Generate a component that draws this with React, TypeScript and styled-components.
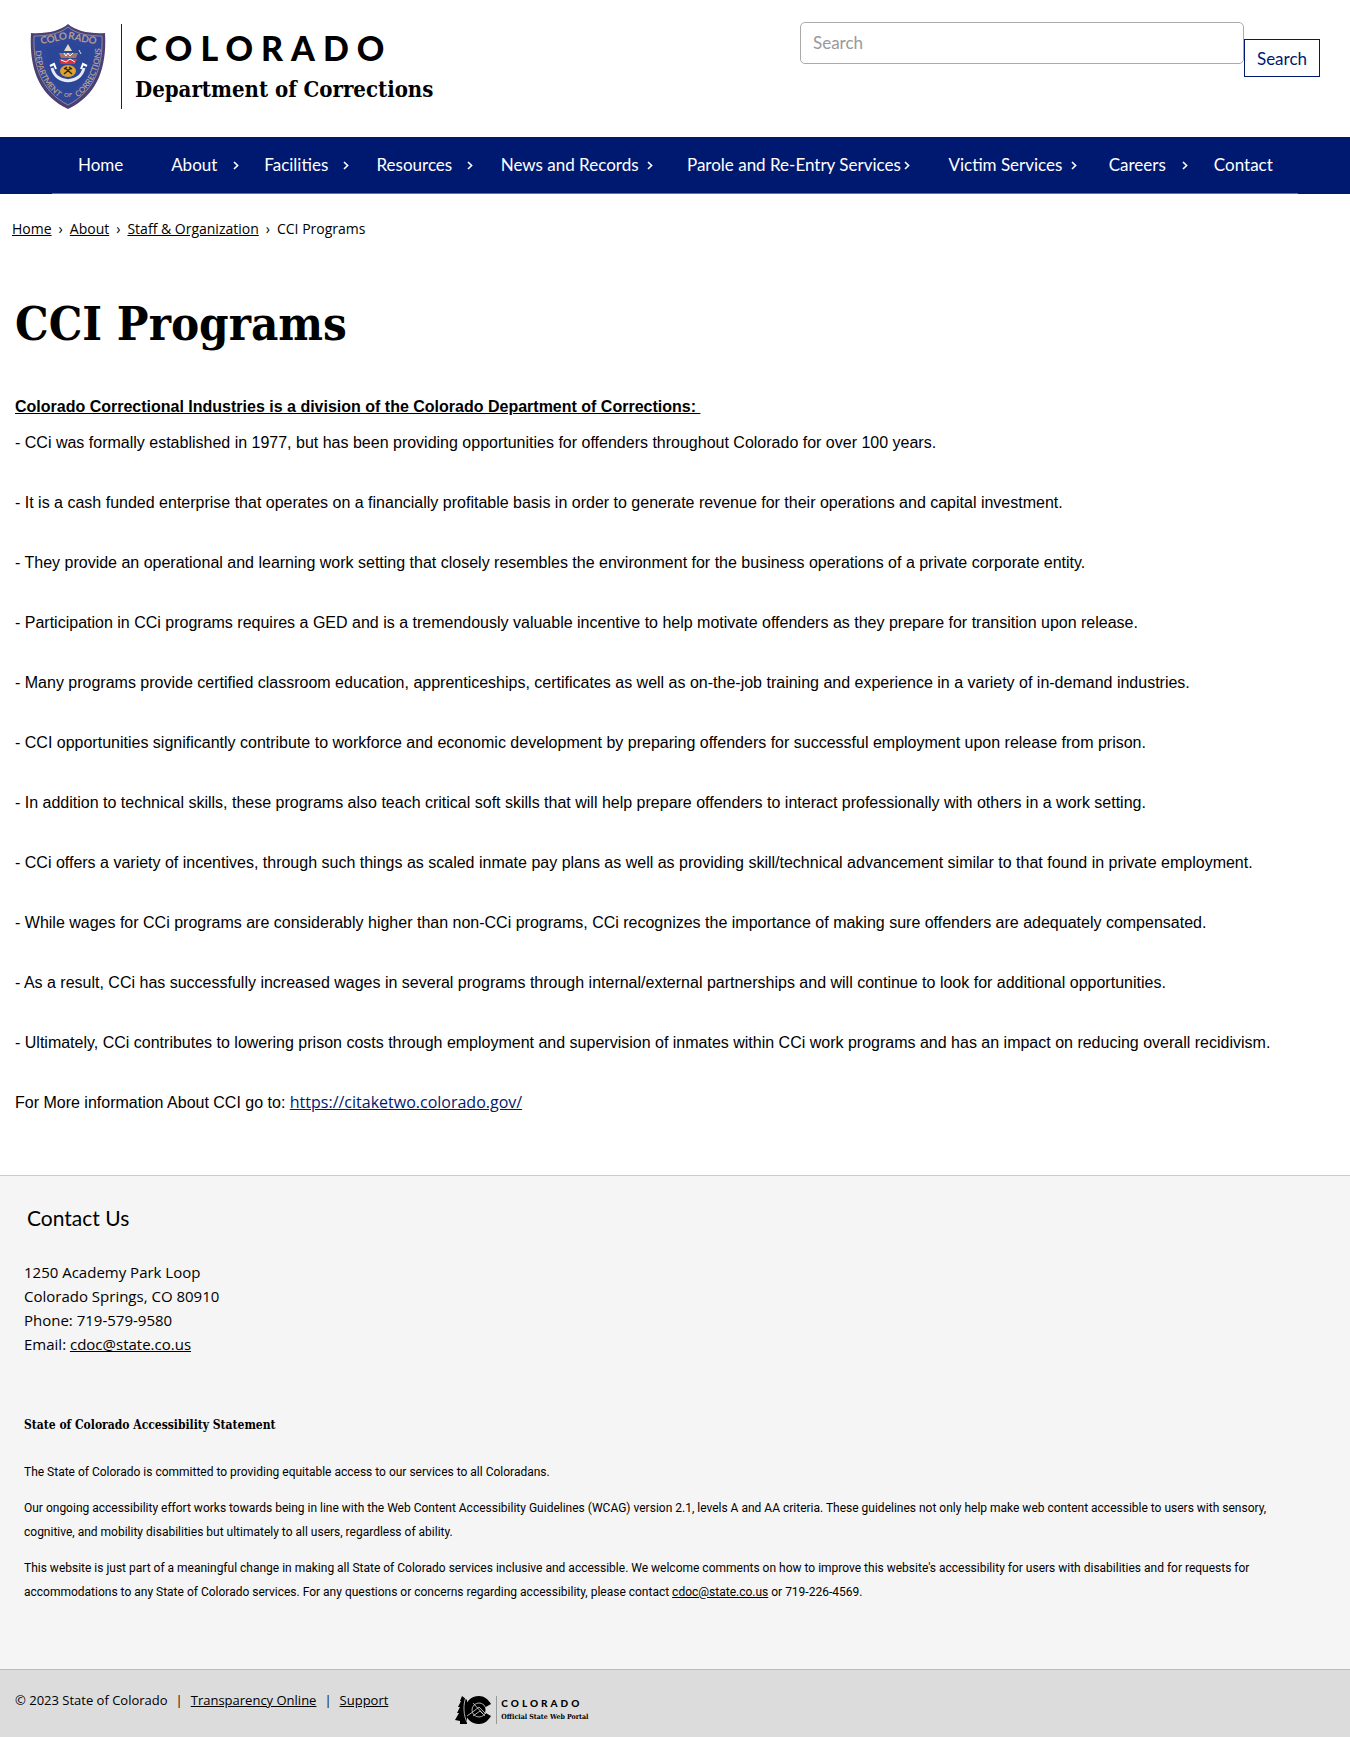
import React from "react";
import styled, { createGlobalStyle } from "styled-components";

const humanist = `"Open Sans", "Noto Sans", sans-serif`;
const geometric = `Lato, "Open Sans", sans-serif`;
const slab = `"DejaVu Serif Condensed", "DejaVu Serif", serif`;
const arial = `"Liberation Sans", Arial, sans-serif`;
const compact = `Roboto, "Open Sans", sans-serif`;

const GlobalStyle = createGlobalStyle`
  *, *::before, *::after { box-sizing: border-box; }
  body { margin: 0; background: #fff; color: #000; font-family: ${humanist}; }
  a { color: inherit; }
  h1, h2, p, ul, ol { margin: 0; padding: 0; }
  ul, ol { list-style: none; }
`;

const Header = styled.header`
  display: flex;
  justify-content: space-between;
  align-items: flex-start;
  padding: 22px 30px 28px;
`;

const Brand = styled.a`
  display: flex;
  color: #000;
  text-decoration: none;
`;

const Shield = styled.svg`
  width: 76px;
  height: 87px;
`;

const BrandText = styled.div`
  margin: 2px 0 0 15px;
  padding: 7px 0 0 13px;
  border-left: 1px solid #222;
  height: 85px;
`;

const BrandName = styled.div`
  font: 900 34px/34px ${geometric};
  letter-spacing: 8px;
`;

const BrandUnit = styled.div`
  margin-top: 8px;
  font: bold 22px/32px ${slab};
  white-space: nowrap;
`;

const SearchForm = styled.form`
  display: flex;
  align-items: flex-start;
  width: 520px;
`;

const SearchInput = styled.input`
  flex: 1;
  min-width: 0;
  height: 42px;
  padding: 0 12px 2px;
  border: 1px solid #aaa;
  border-radius: 5px;
  background: #fff;
  font: 17px ${geometric};
  &::placeholder { color: #999; opacity: 1; }
`;

const SearchButton = styled.button`
  width: 76px;
  height: 38px;
  margin-top: 17px;
  padding: 0;
  border: 1px solid #001970;
  background: #fff;
  color: #001970;
  font: 17px ${geometric};
`;

const Nav = styled.nav`
  background: #001970;
  padding: 0 52px;
`;

const NavList = styled.ul<{ $columns: string }>`
  display: grid;
  grid-template-columns: ${(p) => p.$columns};
  height: 57px;
  padding-left: 26px;
  border-bottom: 1px solid #5f70ad;
`;

const NavItem = styled.li<{ $gap: number }>`
  display: flex;
  justify-content: space-between;
  align-items: center;
  padding-right: ${(p) => p.$gap}px;
  color: #fff;
  font: 17px/24px ${geometric};
  white-space: nowrap;
`;

const NavLink = styled.a`
  text-decoration: none;
`;

const Chevron = styled.svg`
  width: 6px;
  height: 9px;
  flex: none;
  fill: none;
  stroke: #fff;
  stroke-width: 1.6;
`;

const Breadcrumb = styled.ol`
  display: flex;
  gap: 7px;
  padding: 23px 12px 0;
  font: 14px/24px ${humanist};
`;

const Main = styled.main`
  padding: 0 15px 36px;
`;

const Title = styled.h1`
  padding: 50px 0 38px;
  font: bold 47px/66px ${slab};
`;

const Lead = styled.p`
  font: bold 16px/24px ${arial};
  text-decoration: underline;
  white-space: pre-wrap;
`;

const Point = styled.p`
  margin-top: 12px;
  padding-bottom: 24px;
  font: 16px/24px ${arial};
`;

const SiteLink = styled.a`
  color: #001970;
  font-family: ${humanist};
  line-height: 20px;
`;

const Footer = styled.footer`
  border-top: 1px solid #ccc;
  background: #f5f5f5;
`;

const FooterBody = styled.div`
  padding: 26px 48px 65px 24px;
`;

const ContactTitle = styled.h2`
  padding: 0 3px;
  font: 21px/32px ${geometric};
`;

const Address = styled.address`
  margin-top: 26px;
  font: 15px/24px ${humanist};
`;

const StatementTitle = styled.h2`
  margin: 57px 0 23px;
  font: bold 12px/24px ${slab};
`;

const Statement = styled.p`
  margin-top: 12px;
  font: 12px/24px ${compact};
`;

const BottomBar = styled.div`
  display: flex;
  align-items: flex-start;
  padding: 18px 15px 13px;
  border-top: 1px solid #bbb;
  background: #dcdcdc;
  font: 13px/24px ${humanist};
`;

const Legal = styled.div`
  display: flex;
  gap: 8px;
`;

const Portal = styled.a`
  display: flex;
  margin: 8px 0 0 67px;
  color: #000;
  text-decoration: none;
`;

const PortalMark = styled.svg`
  width: 37px;
  height: 28px;
`;

const PortalText = styled.div`
  margin-left: 4px;
  padding-left: 4px;
  border-left: 1px solid #999;
`;

const PortalName = styled.div`
  font: 900 10px/15px ${geometric};
  letter-spacing: 3px;
`;

const PortalUnit = styled.div`
  font: bold 7px/12px ${slab};
`;

const menu = [
  { label: "Home", share: 93, gap: 0 },
  { label: "About", share: 93, gap: 25, sub: true },
  { label: "Facilities", share: 112, gap: 27, sub: true },
  { label: "Resources", share: 124, gap: 28, sub: true },
  { label: "News and Records", share: 186, gap: 34, sub: true },
  { label: "Parole and Re-Entry Services", share: 261, gap: 38, sub: true },
  { label: "Victim Services", share: 160, gap: 32, sub: true },
  { label: "Careers", share: 105, gap: 26, sub: true },
  { label: "Contact", share: 84, gap: 0 },
];

const menuColumns = menu.map((m) => `${m.share}fr`).join(" ");

const points = [
  "- CCi was formally established in 1977, but has been providing opportunities for offenders throughout Colorado for over 100 years.",
  "- It is a cash funded enterprise that operates on a financially profitable basis in order to generate revenue for their operations and capital investment.",
  "- They provide an operational and learning work setting that closely resembles the environment for the business operations of a private corporate entity.",
  "- Participation in CCi programs requires a GED and is a tremendously valuable incentive to help motivate offenders as they prepare for transition upon release.",
  "- Many programs provide certified classroom education, apprenticeships, certificates as well as on-the-job training and experience in a variety of in-demand industries.",
  "- CCI opportunities significantly contribute to workforce and economic development by preparing offenders for successful employment upon release from prison.",
  "- In addition to technical skills, these programs also teach critical soft skills that will help prepare offenders to interact professionally with others in a work setting.",
  "- CCi offers a variety of incentives, through such things as scaled inmate pay plans as well as providing skill/technical advancement similar to that found in private employment.",
  "- While wages for CCi programs are considerably higher than non-CCi programs, CCi recognizes the importance of making sure offenders are adequately compensated.",
  "- As a result, CCi has successfully increased wages in several programs through internal/external partnerships and will continue to look for additional opportunities.",
  "- Ultimately, CCi contributes to lowering prison costs through employment and supervision of inmates within CCi work programs and has an impact on reducing overall recidivism.",
];

function ShieldLogo() {
  return (
    <Shield viewBox="0 0 76 87" aria-hidden="true">
      <defs>
        <path id="arcTop" d="M8 22 C28 21 31 17 38 17 C45 17 48 21 69 22" />
        <path id="arcLeft" d="M5 22 C5 50 16 68 34 79" />
        <path id="arcRight" d="M43 79 C60 68 71 50 71 20" />
      </defs>
      <path d="M38 2 C30 9 16 12 1 11 C-1 45 8 73 38 87 C68 73 77 45 75 11 C60 12 46 9 38 2Z" fill="#4a4074" />
      <path d="M38 5 C30 12 17 14 4 14 C3 44 11 69 38 83 C65 69 73 44 72 14 C59 14 46 12 38 5Z" fill="#2f479b" stroke="#9a8794" />
      <path d="M17 25 C28 25 33 22 38 19 C43 22 48 25 59 25 C61 47 52 64 38 72 C24 64 15 47 17 25Z" fill="#2b4696" />
      <g fill="#b39a8e" fontFamily="Lato, sans-serif" fontWeight="700">
        <text fontSize="10"><textPath href="#arcTop" startOffset="50%" textAnchor="middle">COLORADO</textPath></text>
        <text fontSize="8"><textPath href="#arcLeft" startOffset="50%" textAnchor="middle">DEPARTMENT</textPath></text>
        <text fontSize="8"><textPath href="#arcRight" startOffset="50%" textAnchor="middle">CORRECTIONS</textPath></text>
        <text x="38" y="75" fontSize="6" textAnchor="middle">OF</text>
      </g>
      <path d="M34 29 L38 22 L42 29Z" fill="#e4d9c4" />
      <path d="M29 31 H48 L46 36 H31Z" fill="#a37469" />
      <path d="M34 31 L36 34 L38 31 L40 34 L43 31" fill="none" stroke="#fff" />
      <path d="M49 28 L51 32" stroke="#ddd" />
      <path d="M29 37 H47 L45 42 H31Z" fill="#d7343a" />
      <path d="M31 38 L36 40 L40 37 L45 40" fill="none" stroke="#fff" />
      <ellipse cx="38" cy="49" rx="8" ry="6" fill="#dfa32c" />
      <path d="M34 52 L41 46 M42 52 L35 46 M34 47 L37 45 M39 45 L42 47" stroke="#2d2418" strokeWidth="1.5" />
      <path d="M22 46 C26 63 50 63 54 46" fill="none" stroke="#e6eaf2" strokeWidth="3" />
      <path d="M20 44 L24 42 L26 47 M57 44 L53 42 L51 47" fill="none" stroke="#fff" strokeWidth="2" />
    </Shield>
  );
}

function PortalLogo() {
  return (
    <PortalMark viewBox="0 0 37 28" aria-hidden="true">
      <path d="M7 0 L5 5 L6 5 L3 11 L5 11 L2 17 L4 17 L0 24 L5 25 L5 28 H12 V4Z" />
      <path d="M36 8 C33 3 29 0 24 0 C16 0 10 6 10 14 C10 22 16 28 24 28 C29 28 33 25 36 20 L29 16 C28 19 26 20 24 20 C20 20 18 17 18 14 C18 11 20 8 24 8 C26 8 28 9 29 12Z" />
      <circle cx="24" cy="14" r="7" stroke="#dcdcdc" strokeWidth="0.8" />
      <path d="M12 20 L19 15 L24 11 L31 18 M18 20 L25 15 L28 18 M18 7 L30 20" fill="none" stroke="#dcdcdc" strokeWidth="0.8" />
      <path d="M11 1 C8 8 8 20 13 28" fill="none" stroke="#dcdcdc" strokeWidth="0.8" />
    </PortalMark>
  );
}

export default function App() {
  return (
    <>
      <GlobalStyle />
      <Header>
        <Brand href="#home">
          <ShieldLogo />
          <BrandText>
            <BrandName>COLORADO</BrandName>
            <BrandUnit>Department of Corrections</BrandUnit>
          </BrandText>
        </Brand>
        <SearchForm role="search">
          <SearchInput type="text" placeholder="Search" aria-label="Search" />
          <SearchButton type="button">Search</SearchButton>
        </SearchForm>
      </Header>
      <Nav aria-label="Main">
        <NavList $columns={menuColumns}>
          {menu.map((m) => (
            <NavItem key={m.label} $gap={m.gap}>
              <NavLink href="#menu">{m.label}</NavLink>
              {m.sub && (
                <Chevron viewBox="0 0 6 9" aria-hidden="true">
                  <path d="M1 1 L4.6 4.5 L1 8" />
                </Chevron>
              )}
            </NavItem>
          ))}
        </NavList>
      </Nav>
      <nav aria-label="Breadcrumb">
        <Breadcrumb>
          <li><a href="#home">Home</a></li>
          <li aria-hidden="true">›</li>
          <li><a href="#about">About</a></li>
          <li aria-hidden="true">›</li>
          <li><a href="#staff">Staff &amp; Organization</a></li>
          <li aria-hidden="true">›</li>
          <li>CCI Programs</li>
        </Breadcrumb>
      </nav>
      <Main>
        <Title>CCI Programs</Title>
        <Lead>{"Colorado Correctional Industries is a division of the Colorado Department of Corrections: "}</Lead>
        {points.map((p) => (
          <Point key={p}>{p}</Point>
        ))}
        <Point>
          For More information About CCI go to: <SiteLink href="#cci">https://citaketwo.colorado.gov/</SiteLink>
        </Point>
      </Main>
      <Footer>
        <FooterBody>
          <ContactTitle>Contact Us</ContactTitle>
          <Address>
            1250 Academy Park Loop<br />
            Colorado Springs, CO 80910<br />
            Phone: 719-579-9580<br />
            Email: <a href="#mail">cdoc@state.co.us</a>
          </Address>
          <StatementTitle>State of Colorado Accessibility Statement</StatementTitle>
          <Statement>The State of Colorado is committed to providing equitable access to our services to all Coloradans.</Statement>
          <Statement>
            Our ongoing accessibility effort works towards being in line with the Web Content Accessibility Guidelines (WCAG) version 2.1, levels A and AA criteria. These guidelines not only help make web content accessible to users with sensory, cognitive, and mobility disabilities but ultimately to all users, regardless of ability.
          </Statement>
          <Statement>
            This website is just part of a meaningful change in making all State of Colorado services inclusive and accessible. We welcome comments on how to improve this website's accessibility for users with disabilities and for requests for accommodations to any State of Colorado services. For any questions or concerns regarding accessibility, please contact <a href="#mail">cdoc@state.co.us</a> or 719-226-4569.
          </Statement>
        </FooterBody>
        <BottomBar>
          <Legal>
            <span>© 2023 State of Colorado</span>
            <span>|</span>
            <a href="#transparency">Transparency Online</a>
            <span>|</span>
            <a href="#support">Support</a>
          </Legal>
          <Portal href="#portal">
            <PortalLogo />
            <PortalText>
              <PortalName>COLORADO</PortalName>
              <PortalUnit>Official State Web Portal</PortalUnit>
            </PortalText>
          </Portal>
        </BottomBar>
      </Footer>
    </>
  );
}
